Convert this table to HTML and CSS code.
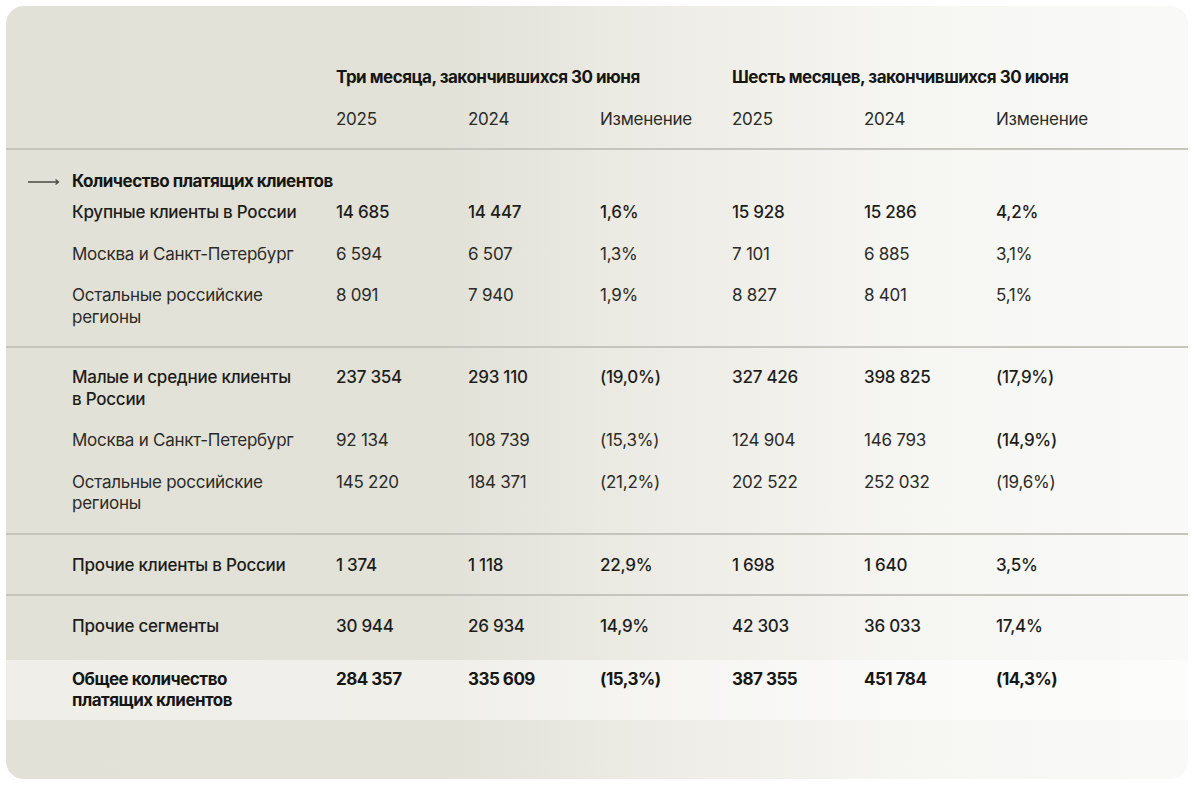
FILE: index.html
```html
<!DOCTYPE html>
<html lang="ru">
<head>
<meta charset="utf-8">
<link rel="stylesheet" href="styles.css">
</head>
<body>
<div class="card">
  <div class="head">
    <div class="row htop">
      <div class="g1">Три месяца, закончившихся 30 июня</div>
      <div class="g2">Шесть месяцев, закончившихся 30 июня</div>
    </div>
    <div class="row hsub">
      <div class="c3">2025</div><div>2024</div><div>Изменение</div>
      <div>2025</div><div>2024</div><div>Изменение</div>
    </div>
  </div>

  <div class="section first">
    <div class="row title">
      <div class="arrow"><svg width="32" height="10" viewBox="0 0 32 10"><path d="M0 5H30.5M27.5 2.5L30.5 5L27.5 7.5" fill="none" stroke="#4a4a42" stroke-width="1.3"/></svg></div>
      <div class="ttl">Количество платящих клиентов</div>
    </div>
    <div class="row med">
      <div class="lbl">Крупные клиенты в России</div>
      <div>14 685</div><div>14 447</div><div>1,6%</div><div>15 928</div><div>15 286</div><div>4,2%</div>
    </div>
    <div class="row">
      <div class="lbl">Москва и Санкт-Петербург</div>
      <div>6 594</div><div>6 507</div><div>1,3%</div><div>7 101</div><div>6 885</div><div>3,1%</div>
    </div>
    <div class="row">
      <div class="lbl">Остальные российские регионы</div>
      <div>8 091</div><div>7 940</div><div>1,9%</div><div>8 827</div><div>8 401</div><div>5,1%</div>
    </div>
  </div>

  <div class="section second">
    <div class="row med">
      <div class="lbl">Малые и средние клиенты в России</div>
      <div>237 354</div><div>293 110</div><div>(19,0%)</div><div>327 426</div><div>398 825</div><div>(17,9%)</div>
    </div>
    <div class="row">
      <div class="lbl">Москва и Санкт-Петербург</div>
      <div>92 134</div><div>108 739</div><div>(15,3%)</div><div>124 904</div><div>146 793</div><div class="m">(14,9%)</div>
    </div>
    <div class="row">
      <div class="lbl">Остальные российские регионы</div>
      <div>145 220</div><div>184 371</div><div>(21,2%)</div><div>202 522</div><div>252 032</div><div>(19,6%)</div>
    </div>
  </div>

  <div class="section">
    <div class="row med">
      <div class="lbl">Прочие клиенты в России</div>
      <div>1 374</div><div>1 118</div><div>22,9%</div><div>1 698</div><div>1 640</div><div>3,5%</div>
    </div>
  </div>

  <div class="section last">
    <div class="row med">
      <div class="lbl">Прочие сегменты</div>
      <div>30 944</div><div>26 934</div><div>14,9%</div><div>42 303</div><div>36 033</div><div>17,4%</div>
    </div>
  </div>

  <div class="total">
    <div class="row bold">
      <div class="lbl">Общее количество платящих клиентов</div>
      <div>284 357</div><div>335 609</div><div>(15,3%)</div><div>387 355</div><div>451 784</div><div>(14,3%)</div>
    </div>
  </div>
</div>
</body>
</html>
```
FILE: styles.css
```css
* { box-sizing: border-box; }
html, body { margin: 0; padding: 0; background: #ffffff; }
body {
  padding: 6px 12px 10px 6px;
  font-family: Inter, "Noto Sans", sans-serif;
  font-size: 17px;
  line-height: 21.5px;
  color: #2b2b27;
  letter-spacing: -0.25px;
}
.card {
  width: 1182px;
  height: 773px;
  border-radius: 18px;
  background: linear-gradient(90deg, #e2e1d8 0%, #e3e2d9 38%, #eeede7 58%, #f6f6f3 78%, #f9f9f7 100%);
  overflow: hidden;
}
.row {
  display: grid;
  grid-template-columns: 66px 264px repeat(6, 132px);
  padding: 10px 0;
}
.row .lbl { grid-column: 2; padding-right: 36px; }
.row .c3 { grid-column: 3; }
.row .g1 { grid-column: 3 / span 3; white-space: nowrap; }
.row .g2 { grid-column: 6 / span 3; white-space: nowrap; }
.head {
  line-height: 21px;
  padding-top: 51px;
  padding-bottom: 8px;
  border-bottom: 2px solid #c6c5bd;
}
.htop { font-weight: 700; color: #161614; letter-spacing: -0.5px; }
.hsub { padding-top: 11px; }
.section {
  padding: 10px 0 8px;
  border-bottom: 2px solid #c6c5bd;
}
.section.first { padding-top: 11px; padding-bottom: 7.5px; }
.section.second { padding-top: 9.5px; }
.section.last { border-bottom: none; padding-bottom: 12px; }
.title { padding-bottom: 0; margin-bottom: -0.5px; font-weight: 700; color: #161614; letter-spacing: -0.5px; }
.title .arrow { grid-column: 1; display: flex; align-items: center; padding-left: 22px; }
.title .ttl { grid-column: 2 / span 3; white-space: nowrap; }
.med { font-weight: 500; color: #1d1d1a; }
.m { font-weight: 500; color: #1d1d1a; }
.total {
  background: linear-gradient(90deg, rgba(255,255,255,0.45), rgba(255,255,255,0.5));
}
.total .row { padding: 9px 0 8px; }
.bold { font-weight: 700; color: #161614; letter-spacing: -0.5px; }
```
